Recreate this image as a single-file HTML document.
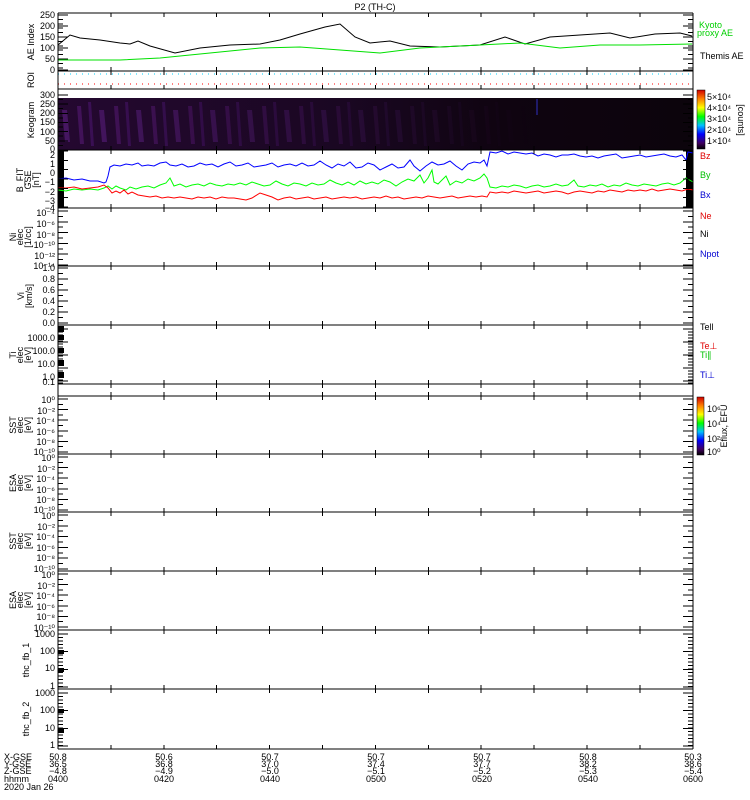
<!DOCTYPE html>
<html><head><meta charset="utf-8"><style>
html,body{margin:0;padding:0;background:#fff;width:750px;height:800px;overflow:hidden}
svg{display:block}
text{font-family:"Liberation Sans",sans-serif;font-size:9px}
.l text{text-anchor:end}
.b text{text-anchor:middle}
</style></head><body>
<svg width="750" height="800" xmlns="http://www.w3.org/2000/svg">
<defs>
<linearGradient id="keo" x1="0" x2="1" y1="0" y2="0">
<stop offset="0" stop-color="#240830"/><stop offset="0.45" stop-color="#1a0722"/><stop offset="0.7" stop-color="#0f0410"/><stop offset="1" stop-color="#0c040c"/></linearGradient>
<linearGradient id="fade" x1="0" x2="1" y1="0" y2="0">
<stop offset="0" stop-color="#fff" stop-opacity="0.45"/><stop offset="0.5" stop-color="#fff" stop-opacity="0.15"/><stop offset="0.75" stop-color="#fff" stop-opacity="0"/></linearGradient>
<mask id="m"><rect x="58" y="98" width="635" height="52" fill="url(#fade)"/></mask>
<pattern id="str" x="0" y="98" width="37" height="52" patternUnits="userSpaceOnUse">
<polygon points="3,8 7,8 10,46 6,46" fill="#6a2090"/><polygon points="14,4 17,4 20,48 17,48" fill="#5a1a88"/><polygon points="25,12 30,12 33,44 28,44" fill="#7028a0"/></pattern>
<linearGradient id="cb" x1="0" x2="0" y1="1" y2="0">
<stop offset="0" stop-color="#000"/><stop offset="0.1" stop-color="#400060"/><stop offset="0.25" stop-color="#0000ff"/><stop offset="0.4" stop-color="#00c0ff"/><stop offset="0.55" stop-color="#00ff00"/><stop offset="0.7" stop-color="#ffff00"/><stop offset="0.85" stop-color="#ff8000"/><stop offset="1" stop-color="#d00000"/></linearGradient>
</defs>
<rect width="750" height="800" fill="#fff"/>
<text x="375" y="10" text-anchor="middle" font-size="11">P2 (TH-C)</text>

<rect x="58" y="98" width="635" height="52" fill="url(#keo)"/>
<rect x="58" y="98" width="635" height="52" fill="url(#str)" mask="url(#m)"/>
<line x1="537" x2="537" y1="99" y2="115" stroke="#3030c0"/>
<rect x="58" y="150" width="6" height="58" fill="#000"/>
<rect x="686" y="150" width="7" height="58" fill="#000"/>

<polyline fill="none" stroke="#000" points="58,45 70,35 80,38 100,40 120,43 130,44 138,41 150,46 175,53 200,48 230,45 260,44 280,40 300,34 325,27 340,24 355,37 370,43 390,41 410,46 440,47 480,45 505,37 525,44 550,37 580,35 610,33 630,38 655,34 680,33 692,36"/>
<polyline fill="none" stroke="#00e000" points="58,60 120,60 160,58 210,53 260,48 300,47 340,50 380,53 420,48 480,45 520,43 560,48 600,45 640,45 692,44"/>
<line x1="58" x2="692" y1="74" y2="74" stroke="#00d0ff" stroke-dasharray="1,5"/>
<line x1="58" x2="692" y1="84" y2="84" stroke="#ff0000" stroke-dasharray="1,5"/>

<polyline fill="none" stroke="#0000ff" points="58,179 66,178 74,180 82,179 90,181 98,181 104,183 106,182 108,176 110,167 114,165 120,166 126,164 132,165 138,163 142,166 148,165 154,166 160,163 166,162 170,165 176,166 182,164 188,167 194,166 200,163 206,165 212,164 218,167 224,164 230,162 236,166 242,165 248,163 254,167 260,166 266,165 272,163 278,167 284,165 290,164 296,166 302,163 308,166 314,165 320,161 326,165 332,168 338,164 344,166 350,162 356,168 362,167 368,163 374,165 380,170 386,167 392,164 398,168 404,167 410,160 414,166 420,171 426,166 432,162 438,165 444,164 450,161 456,166 462,170 468,164 474,162 480,163 484,160 487,166 490,152 496,153 502,151 508,154 514,152 520,153 526,154 532,153 538,156 544,154 550,155 556,157 562,155 568,155 574,154 580,156 586,157 592,156 598,158 604,156 610,155 616,154 622,158 628,157 634,156 640,155 646,157 652,156 658,155 664,154 670,156 676,157 682,155 686,160 688,152 693,153"/>
<polyline fill="none" stroke="#00ff00" points="58,190 66,191 74,189 82,190 90,189 98,190 104,188 108,186 112,189 116,186 120,188 126,190 130,187 136,189 142,187 148,186 154,188 160,185 166,183 170,178 174,186 180,184 186,187 192,185 198,184 204,186 210,183 216,185 222,186 228,184 234,185 240,183 246,185 252,182 258,184 264,186 270,185 276,181 282,184 288,186 294,183 300,184 306,186 312,183 318,185 324,184 330,180 336,183 342,185 348,182 354,185 360,181 366,184 372,182 378,184 384,180 390,182 396,186 402,182 408,179 414,181 420,175 424,183 428,178 432,170 434,182 438,184 442,180 446,176 450,185 456,181 462,183 468,179 474,181 480,178 484,174 487,178 490,187 496,188 502,186 508,187 514,185 520,186 526,188 532,186 538,185 544,187 550,186 556,184 562,186 568,185 574,180 578,186 584,187 590,185 596,186 602,184 608,187 614,185 620,186 626,183 632,185 638,186 644,184 650,185 656,186 662,184 668,183 674,185 680,183 686,178 693,182"/>
<polyline fill="none" stroke="#ff0000" points="58,188 66,188 74,187 82,189 90,188 98,187 104,185 108,188 112,193 116,191 120,193 124,190 128,194 132,192 138,195 144,196 150,197 156,196 162,198 168,197 174,198 180,197 186,198 192,199 198,197 204,198 210,197 216,199 222,197 228,198 234,198 240,199 246,200 252,198 260,193 266,195 272,197 278,200 284,198 290,197 296,199 302,198 308,197 314,199 320,198 326,197 332,199 338,198 344,197 350,198 356,197 362,199 368,198 374,197 380,198 386,196 392,198 398,197 404,199 410,198 416,197 422,198 428,196 434,197 440,198 446,197 452,196 458,198 464,197 470,196 476,197 482,196 487,197 490,192 496,193 502,192 508,193 514,191 520,192 526,193 532,192 538,191 544,193 550,192 556,191 562,192 568,194 574,192 580,191 586,192 592,193 598,191 604,192 610,190 616,191 622,192 628,190 634,191 640,190 646,191 652,189 658,191 664,190 670,189 676,190 682,191 688,189 693,190"/>

<g stroke="#000" fill="none" shape-rendering="crispEdges">
<path d="M58,13H693M58,71H693M58,89H693M58,150H693M58,208H693M58,266H693M58,325H693M58,384H693M58,396H693M58,454H693M58,512H693M58,571H693M58,630H693M58,689H693M58,749H693M58,13V749M693,13V749"/>
</g>
<g stroke="#000" stroke-width="4" stroke-dasharray="1,51.9" shape-rendering="crispEdges">
<path d="M57.5,15H694M57.5,69H694M57.5,73H694M57.5,87H694M57.5,152H694M57.5,148H694M57.5,210H694M57.5,206H694M57.5,268H694M57.5,264H694M57.5,327H694M57.5,323H694M57.5,386H694M57.5,382H694M57.5,398H694M57.5,394H694M57.5,456H694M57.5,452H694M57.5,514H694M57.5,510H694M57.5,573H694M57.5,569H694M57.5,632H694M57.5,628H694M57.5,691H694M57.5,687H694M57.5,747H694"/>
</g>
<g stroke="#000" stroke-width="10" shape-rendering="crispEdges">
<line x1="63" x2="63" y1="14.5" y2="71" stroke-dasharray="1,10"/><line x1="688" x2="688" y1="14.5" y2="71" stroke-dasharray="1,10"/>
<line x1="63" x2="63" y1="94.5" y2="151" stroke-dasharray="1,8.17"/><line x1="688" x2="688" y1="94.5" y2="151" stroke-dasharray="1,8.17"/>
<line x1="63" x2="63" y1="150.5" y2="208" stroke-dasharray="1,8.33"/><line x1="688" x2="688" y1="150.5" y2="208" stroke-dasharray="1,8.33"/>
<line x1="63" x2="63" y1="210.5" y2="266" stroke-dasharray="1,9.8"/><line x1="688" x2="688" y1="210.5" y2="266" stroke-dasharray="1,9.8"/>
<line x1="63" x2="63" y1="267.5" y2="325" stroke-dasharray="1,10"/><line x1="688" x2="688" y1="267.5" y2="325" stroke-dasharray="1,10"/>
<line x1="63" x2="63" y1="328.5" y2="384" stroke-dasharray="1,12"/><line x1="688" x2="688" y1="328.5" y2="384" stroke-dasharray="1,12"/>
<line x1="63" x2="63" y1="398.5" y2="454" stroke-dasharray="1,9.6"/><line x1="688" x2="688" y1="398.5" y2="454" stroke-dasharray="1,9.6"/>
<line x1="63" x2="63" y1="456.5" y2="512" stroke-dasharray="1,9.6"/><line x1="688" x2="688" y1="456.5" y2="512" stroke-dasharray="1,9.6"/>
<line x1="63" x2="63" y1="514.5" y2="571" stroke-dasharray="1,9.8"/><line x1="688" x2="688" y1="514.5" y2="571" stroke-dasharray="1,9.8"/>
<line x1="63" x2="63" y1="573.5" y2="630" stroke-dasharray="1,9.6"/><line x1="688" x2="688" y1="573.5" y2="630" stroke-dasharray="1,9.6"/>
<line x1="63" x2="63" y1="633.5" y2="689" stroke-dasharray="1,16.67"/><line x1="688" x2="688" y1="633.5" y2="689" stroke-dasharray="1,16.67"/>
<line x1="63" x2="63" y1="692.5" y2="749" stroke-dasharray="1,16.67"/><line x1="688" x2="688" y1="692.5" y2="749" stroke-dasharray="1,16.67"/>
</g>
<g stroke="#000" stroke-width="5" shape-rendering="crispEdges">
<line x1="60.5" x2="60.5" y1="14.5" y2="71" stroke-dasharray="1,3.4"/><line x1="690.5" x2="690.5" y1="14.5" y2="71" stroke-dasharray="1,3.4"/>
<line x1="60.5" x2="60.5" y1="94.5" y2="150" stroke-dasharray="1,3.58"/><line x1="690.5" x2="690.5" y1="94.5" y2="150" stroke-dasharray="1,3.58"/>
<line x1="60.5" x2="60.5" y1="150.5" y2="208" stroke-dasharray="1,3.67"/><line x1="690.5" x2="690.5" y1="150.5" y2="208" stroke-dasharray="1,3.67"/>
<line x1="60.5" x2="60.5" y1="210.5" y2="266" stroke-dasharray="1,4.4"/><line x1="690.5" x2="690.5" y1="210.5" y2="266" stroke-dasharray="1,4.4"/>
<line x1="60.5" x2="60.5" y1="267.5" y2="325" stroke-dasharray="1,4.5"/><line x1="690.5" x2="690.5" y1="267.5" y2="325" stroke-dasharray="1,4.5"/>
<line x1="60.5" x2="60.5" y1="398.5" y2="454" stroke-dasharray="1,4.3"/><line x1="690.5" x2="690.5" y1="398.5" y2="454" stroke-dasharray="1,4.3"/>
<line x1="60.5" x2="60.5" y1="456.5" y2="512" stroke-dasharray="1,4.3"/><line x1="690.5" x2="690.5" y1="456.5" y2="512" stroke-dasharray="1,4.3"/>
<line x1="60.5" x2="60.5" y1="514.5" y2="571" stroke-dasharray="1,4.4"/><line x1="690.5" x2="690.5" y1="514.5" y2="571" stroke-dasharray="1,4.4"/>
<line x1="60.5" x2="60.5" y1="573.5" y2="630" stroke-dasharray="1,4.3"/><line x1="690.5" x2="690.5" y1="573.5" y2="630" stroke-dasharray="1,4.3"/>
<line x1="60.5" x2="60.5" y1="633.5" y2="689" stroke-dasharray="1,2.5"/><line x1="690.5" x2="690.5" y1="633.5" y2="689" stroke-dasharray="1,2.5"/>
<line x1="60.5" x2="60.5" y1="692.5" y2="749" stroke-dasharray="1,2.5"/><line x1="690.5" x2="690.5" y1="692.5" y2="749" stroke-dasharray="1,2.5"/>
<line x1="60.5" x2="60.5" y1="328.5" y2="384" stroke-dasharray="1,2"/><line x1="690.5" x2="690.5" y1="328.5" y2="384" stroke-dasharray="1,2"/>
</g>
<g fill="#000"><rect x="58" y="326" width="6" height="6"/><rect x="58" y="335" width="6" height="5"/><rect x="58" y="348" width="6" height="5"/><rect x="58" y="360" width="6" height="6"/><rect x="58" y="372" width="6" height="6"/><rect x="58" y="650" width="6" height="4"/><rect x="58" y="668" width="6" height="4"/><rect x="58" y="709" width="6" height="4"/><rect x="58" y="728" width="6" height="5"/></g>

<g class="l">
<text x="55" y="18">250</text><text x="55" y="29">200</text><text x="55" y="40">150</text><text x="55" y="51">100</text><text x="55" y="62">50</text><text x="55" y="73">0</text>
<text x="55" y="98">300</text><text x="55" y="107">250</text><text x="55" y="116">200</text><text x="55" y="125">150</text><text x="55" y="135">100</text><text x="55" y="144">50</text><text x="55" y="152">0</text>
<text x="55" y="158">2</text><text x="55" y="167">1</text><text x="55" y="176">0</text><text x="55" y="185">−1</text><text x="55" y="195">−2</text><text x="55" y="204">−3</text><text x="55" y="211">−4</text>
<text x="55" y="216">10⁻⁴</text><text x="55" y="227">10⁻⁶</text><text x="55" y="238">10⁻⁸</text><text x="55" y="248">10⁻¹⁰</text><text x="55" y="259">10⁻¹²</text><text x="55" y="269">10⁻¹⁴</text>
<text x="55" y="271">1.0</text><text x="55" y="282">0.8</text><text x="55" y="293">0.6</text><text x="55" y="304">0.4</text><text x="55" y="315">0.2</text><text x="55" y="326">0.0</text>
<text x="55" y="341">1000.0</text><text x="55" y="354">100.0</text><text x="55" y="367">10.0</text><text x="55" y="380">1.0</text><text x="55" y="385">0.1</text>
<text x="55" y="403">10⁰</text><text x="55" y="414">10⁻²</text><text x="55" y="424">10⁻⁴</text><text x="55" y="435">10⁻⁶</text><text x="55" y="445">10⁻⁸</text><text x="55" y="455">10⁻¹⁰</text>
<text x="55" y="461">10⁰</text><text x="55" y="472">10⁻²</text><text x="55" y="482">10⁻⁴</text><text x="55" y="493">10⁻⁶</text><text x="55" y="503">10⁻⁸</text><text x="55" y="513">10⁻¹⁰</text>
<text x="55" y="519">10⁰</text><text x="55" y="530">10⁻²</text><text x="55" y="540">10⁻⁴</text><text x="55" y="551">10⁻⁶</text><text x="55" y="561">10⁻⁸</text><text x="55" y="572">10⁻¹⁰</text>
<text x="55" y="578">10⁰</text><text x="55" y="589">10⁻²</text><text x="55" y="599">10⁻⁴</text><text x="55" y="610">10⁻⁶</text><text x="55" y="620">10⁻⁸</text><text x="55" y="631">10⁻¹⁰</text>
<text x="55" y="637">1000</text><text x="55" y="654">100</text><text x="55" y="671">10</text><text x="55" y="689">1</text>
<text x="55" y="696">1000</text><text x="55" y="713">100</text><text x="55" y="731">10</text><text x="55" y="748">1</text>
</g>
<g text-anchor="middle">
<text transform="translate(34,42) rotate(-90)">AE Index</text>
<text transform="translate(34,80) rotate(-90)">ROI</text>
<text transform="translate(34,120) rotate(-90)">Keogram</text>
<text transform="translate(23,180) rotate(-90)">B_FIT</text><text transform="translate(31,180) rotate(-90)" font-size="7">GSE</text><text transform="translate(39,180) rotate(-90)">[nT]</text>
<text transform="translate(16,237) rotate(-90)">Ni</text><text transform="translate(23,237) rotate(-90)" font-size="7">elec</text><text transform="translate(31,237) rotate(-90)">[1/cc]</text>
<text transform="translate(24,296) rotate(-90)">Vi</text><text transform="translate(32,296) rotate(-90)">[km/s]</text>
<text transform="translate(16,355) rotate(-90)">Ti</text><text transform="translate(23,355) rotate(-90)" font-size="7">elec</text><text transform="translate(31,355) rotate(-90)">[eV]</text>
<text transform="translate(16,425) rotate(-90)">SST</text><text transform="translate(23,425) rotate(-90)" font-size="7">elec</text><text transform="translate(31,425) rotate(-90)">[eV]</text>
<text transform="translate(16,483) rotate(-90)">ESA</text><text transform="translate(23,483) rotate(-90)" font-size="7">elec</text><text transform="translate(31,483) rotate(-90)">[eV]</text>
<text transform="translate(16,541) rotate(-90)">SST</text><text transform="translate(23,541) rotate(-90)" font-size="7">elec</text><text transform="translate(31,541) rotate(-90)">[eV]</text>
<text transform="translate(16,600) rotate(-90)">ESA</text><text transform="translate(23,600) rotate(-90)" font-size="7">elec</text><text transform="translate(31,600) rotate(-90)">[eV]</text>
<text transform="translate(29,660) rotate(-90)">thc_fb_1</text>
<text transform="translate(29,719) rotate(-90)">thc_fb_2</text>
</g>

<text x="699" y="28" fill="#00d000">Kyoto</text>
<text x="697" y="36" fill="#00d000">proxy AE</text>
<text x="700" y="59">Themis AE</text>
<rect x="697" y="90" width="8" height="59" fill="url(#cb)" stroke="#000" stroke-width="0.5"/>
<text x="707" y="100" font-size="8">5×10⁴</text><text x="707" y="111" font-size="8">4×10⁴</text><text x="707" y="122" font-size="8">3×10⁴</text><text x="707" y="133" font-size="8">2×10⁴</text><text x="707" y="144" font-size="8">1×10⁴</text>
<text transform="translate(738,120) rotate(90)" font-size="8" text-anchor="middle">[counts]</text>
<text x="700" y="159" fill="#e00000">Bz</text><text x="700" y="178" fill="#00c000">By</text><text x="700" y="198" fill="#0000d0">Bx</text>
<text x="700" y="219" fill="#e00000">Ne</text><text x="700" y="237">Ni</text><text x="700" y="257" fill="#0000d0">Npot</text>
<text x="700" y="330">Tell</text><text x="700" y="349" fill="#e00000">Te⊥</text><text x="700" y="358" fill="#00c000">Ti∥</text><text x="700" y="378" fill="#0000d0">Ti⊥</text>
<rect x="697" y="397" width="7" height="58" fill="url(#cb)" stroke="#000" stroke-width="0.5"/>
<text x="707" y="412" font-size="8">10⁶</text><text x="707" y="427" font-size="8">10⁴</text><text x="707" y="442" font-size="8">10²</text><text x="707" y="455" font-size="8">10⁰</text>
<text transform="translate(727,426) rotate(-90)" font-size="8" text-anchor="middle">Eflux, EFU</text>

<g font-size="8.5">
<text x="4" y="760">X-GSE</text><text x="4" y="767">Y-GSE</text><text x="4" y="774">Z-GSE</text><text x="4" y="782">hhmm</text><text x="4" y="790">2020 Jan 26</text>
</g>
<g class="b" font-size="8.5">
<text x="58" y="760">50.8</text><text x="58" y="767">36.5</text><text x="58" y="774">−4.8</text><text x="58" y="782">0400</text>
<text x="164" y="760">50.6</text><text x="164" y="767">36.8</text><text x="164" y="774">−4.9</text><text x="164" y="782">0420</text>
<text x="270" y="760">50.7</text><text x="270" y="767">37.0</text><text x="270" y="774">−5.0</text><text x="270" y="782">0440</text>
<text x="376" y="760">50.7</text><text x="376" y="767">37.4</text><text x="376" y="774">−5.1</text><text x="376" y="782">0500</text>
<text x="482" y="760">50.7</text><text x="482" y="767">37.7</text><text x="482" y="774">−5.2</text><text x="482" y="782">0520</text>
<text x="588" y="760">50.8</text><text x="588" y="767">38.2</text><text x="588" y="774">−5.3</text><text x="588" y="782">0540</text>
<text x="693" y="760">50.3</text><text x="693" y="767">38.6</text><text x="693" y="774">−5.4</text><text x="693" y="782">0600</text>
</g>
</svg>
</body></html>
